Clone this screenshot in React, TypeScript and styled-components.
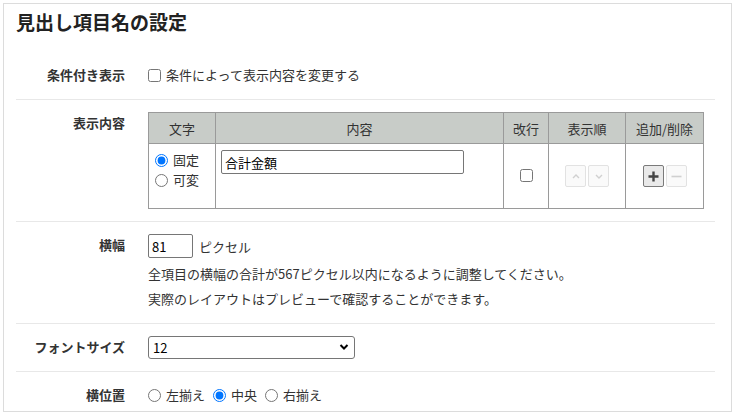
import React from 'react';
import styled, { createGlobalStyle } from 'styled-components';

const GlobalStyle = createGlobalStyle`
  html, body {
    margin: 0;
    padding: 0;
    background: #fff;
  }
  body {
    font-family: 'Noto Sans CJK JP', 'Noto Sans', sans-serif;
    color: #333;
    font-size: 13px;
  }
`;

const Panel = styled.div`
  width: 727px;
  margin: 3px 0 0 3px;
  border: 1px solid #dcdcdc;
  background: #fff;
`;

const Title = styled.h2`
  margin: 0;
  padding: 5px 12px 16px;
  font-size: 19px;
  line-height: 26px;
  font-weight: bold;
  color: #222;
`;

const Form = styled.div`
  margin: 0 16px 0 12px;
`;

const Row = styled.div<{ $last?: boolean }>`
  display: grid;
  grid-template-columns: 109px 1fr;
  column-gap: 23px;
  padding: ${(p) => (p.$last ? '12px 0 5px' : '12px 0')};
  border-bottom: ${(p) => (p.$last ? 'none' : '1px solid #e8e8e8')};
`;

const Label = styled.div<{ $lh?: number }>`
  text-align: right;
  font-weight: bold;
  line-height: ${(p) => p.$lh ?? 22}px;
  height: ${(p) => p.$lh ?? 22}px;
  color: #333;
`;

const Field = styled.div`
  display: flex;
  flex-direction: column;
`;

const Inline = styled.label<{ $h?: number }>`
  display: inline-flex;
  align-items: center;
  gap: 5px;
  height: ${(p) => p.$h ?? 22}px;
  line-height: ${(p) => p.$h ?? 22}px;
  margin-right: 8px;
  cursor: pointer;
`;

const InlineRow = styled.div`
  display: flex;
  align-items: center;
`;

const Check = styled.input.attrs({ type: 'checkbox' })`
  width: 13px;
  height: 13px;
  margin: 0;
`;

const Radio = styled.input.attrs({ type: 'radio' })`
  width: 13px;
  height: 13px;
  margin: 0;
`;

const Table = styled.table`
  width: 555px;
  border-collapse: collapse;
  border: 1px solid #9a9a9a;
  table-layout: fixed;
`;

const Th = styled.th`
  height: 30px;
  padding: 0;
  background: #c8ccc8;
  border: 1px solid #9a9a9a;
  font-weight: normal;
  color: #333;
  text-align: center;
  white-space: nowrap;
`;

const BodyRow = styled.tr`
  height: 65px;
`;

const Td = styled.td<{ $top?: boolean }>`
  padding: ${(p) => (p.$top ? '6px 5px 0' : '0')};
  border: 1px solid #9a9a9a;
  vertical-align: ${(p) => (p.$top ? 'top' : 'middle')};
  text-align: ${(p) => (p.$top ? 'left' : 'center')};
`;

const RadioStack = styled.div`
  display: flex;
  flex-direction: column;
  padding-left: 1px;
`;

const TextInput = styled.input<{ $w: number }>`
  box-sizing: border-box;
  width: ${(p) => p.$w}px;
  height: 24px;
  padding: 0 3px;
  border: 1px solid #767676;
  border-radius: 2px;
  font-family: inherit;
  font-size: 13px;
  color: #000;
  outline: none;
`;

const BtnGroup = styled.div`
  display: inline-flex;
  gap: 2px;
  vertical-align: middle;
`;

const IconBtn = styled.button<{ $active?: boolean }>`
  width: 21px;
  height: 22px;
  padding: 0;
  display: flex;
  align-items: center;
  justify-content: center;
  border: 1px solid ${(p) => (p.$active ? '#7a7a7a' : '#e2e2e2')};
  border-radius: 2px;
  background: ${(p) => (p.$active ? '#e9e9e9' : '#fafafa')};
  color: ${(p) => (p.$active ? '#444' : '#d0d0d0')};
  cursor: ${(p) => (p.$active ? 'pointer' : 'default')};
`;

const Unit = styled.span`
  margin-left: 6px;
`;

const Help = styled.div`
  line-height: 25px;
  color: #333;
`;

const HelpBlock = styled.div`
  margin-top: 3px;
`;

const SelectWrap = styled.div`
  position: relative;
  width: 207px;
`;

const Select = styled.select`
  box-sizing: border-box;
  width: 100%;
  height: 23px;
  padding: 0 4px;
  border: 1px solid #767676;
  border-radius: 3px;
  appearance: none;
  background: #fff;
  font-family: inherit;
  font-size: 13px;
  color: #000;
`;

const SelectArrow = styled.svg`
  position: absolute;
  right: 6px;
  top: 7px;
  pointer-events: none;
`;

const Chevron = ({ dir }: { dir: 'up' | 'down' }) => (
  <svg width="8" height="5" viewBox="0 0 8 5">
    <polyline
      points={dir === 'up' ? '1,4 4,1 7,4' : '1,1 4,4 7,1'}
      fill="none"
      stroke="currentColor"
      strokeWidth="1.4"
    />
  </svg>
);

const PlusIcon = () => (
  <svg width="11" height="11" viewBox="0 0 11 11">
    <path d="M5.5 0.5v10M0.5 5.5h10" stroke="currentColor" strokeWidth="2.4" />
  </svg>
);

const MinusIcon = () => (
  <svg width="11" height="11" viewBox="0 0 11 11">
    <path d="M0.5 5.5h10" stroke="currentColor" strokeWidth="1.6" />
  </svg>
);

const columns = [
  { key: 'char', label: '文字', width: 67 },
  { key: 'content', label: '内容', width: 288 },
  { key: 'br', label: '改行', width: 45 },
  { key: 'order', label: '表示順', width: 77 },
  { key: 'edit', label: '追加/削除', width: 78 },
];

export default function App() {
  return (
    <>
      <GlobalStyle />
      <Panel>
        <Title>見出し項目名の設定</Title>
        <Form>
          <Row>
            <Label $lh={24}>条件付き表示</Label>
            <InlineRow>
              <Inline $h={24}>
                <Check />
                条件によって表示内容を変更する
              </Inline>
            </InlineRow>
          </Row>

          <Row>
            <Label>表示内容</Label>
            <Field>
              <Table>
                <colgroup>
                  {columns.map((c) => (
                    <col key={c.key} style={{ width: c.width }} />
                  ))}
                </colgroup>
                <thead>
                  <tr>
                    {columns.map((c) => (
                      <Th key={c.key}>{c.label}</Th>
                    ))}
                  </tr>
                </thead>
                <tbody>
                  <BodyRow>
                    <Td $top>
                      <RadioStack>
                        <Inline $h={20}>
                          <Radio name="mode" defaultChecked />
                          固定
                        </Inline>
                        <Inline $h={20}>
                          <Radio name="mode" />
                          可変
                        </Inline>
                      </RadioStack>
                    </Td>
                    <Td $top>
                      <TextInput $w={243} defaultValue="合計金額" />
                    </Td>
                    <Td>
                      <Check />
                    </Td>
                    <Td>
                      <BtnGroup>
                        <IconBtn disabled>
                          <Chevron dir="up" />
                        </IconBtn>
                        <IconBtn disabled>
                          <Chevron dir="down" />
                        </IconBtn>
                      </BtnGroup>
                    </Td>
                    <Td>
                      <BtnGroup>
                        <IconBtn $active>
                          <PlusIcon />
                        </IconBtn>
                        <IconBtn disabled>
                          <MinusIcon />
                        </IconBtn>
                      </BtnGroup>
                    </Td>
                  </BodyRow>
                </tbody>
              </Table>
            </Field>
          </Row>

          <Row>
            <Label>横幅</Label>
            <Field>
              <InlineRow>
                <TextInput $w={45} defaultValue="81" />
                <Unit>ピクセル</Unit>
              </InlineRow>
              <HelpBlock>
                <Help>全項目の横幅の合計が567ピクセル以内になるように調整してください。</Help>
                <Help>実際のレイアウトはプレビューで確認することができます。</Help>
              </HelpBlock>
            </Field>
          </Row>

          <Row>
            <Label>フォントサイズ</Label>
            <Field>
              <SelectWrap>
                <Select defaultValue="12">
                  {[8, 9, 10, 11, 12, 14, 16, 18].map((s) => (
                    <option key={s} value={String(s)}>
                      {s}
                    </option>
                  ))}
                </Select>
                <SelectArrow width="10" height="8" viewBox="0 0 10 8">
                  <polyline points="1.5,2 5,5.5 8.5,2" fill="none" stroke="#000" strokeWidth="2" />
                </SelectArrow>
              </SelectWrap>
            </Field>
          </Row>

          <Row $last>
            <Label>横位置</Label>
            <InlineRow>
              <Inline>
                <Radio name="align" />
                左揃え
              </Inline>
              <Inline>
                <Radio name="align" defaultChecked />
                中央
              </Inline>
              <Inline>
                <Radio name="align" />
                右揃え
              </Inline>
            </InlineRow>
          </Row>
        </Form>
      </Panel>
    </>
  );
}
